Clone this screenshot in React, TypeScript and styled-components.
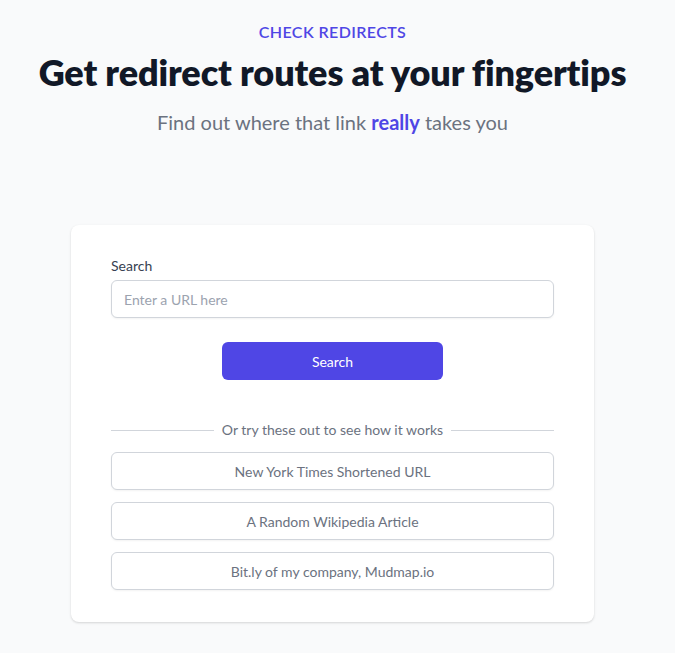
import React from "react";
import styled, { createGlobalStyle } from "styled-components";

const Global = createGlobalStyle`
  html, body { margin: 0; padding: 0; background: #f9fafb; }
  body { font-family: Lato, "Noto Sans", sans-serif; -webkit-font-smoothing: antialiased; }
  * { box-sizing: border-box; }
`;

const Page = styled.div`
  min-height: 653px;
  padding: 20px 10px 0 0;
  display: flex;
  flex-direction: column;
  align-items: center;
`;

const Eyebrow = styled.p`
  margin: 0;
  font-size: 16px;
  line-height: 24px;
  font-weight: 600;
  letter-spacing: 0.025em;
  text-transform: uppercase;
  color: #4f46e5;
`;

const Title = styled.h1`
  margin: 8px 0 0;
  font-size: 36px;
  line-height: 40px;
  font-weight: 800;
  letter-spacing: -0.1px;
  color: #111827;
`;

const Subtitle = styled.p`
  margin: 16px 0 0;
  font-size: 20px;
  line-height: 28px;
  color: #6b7280;
`;

const Accent = styled.span`
  color: #4f46e5;
  font-weight: 700;
`;

const Card = styled.div`
  margin-top: 89px;
  width: 523px;
  background: #fff;
  border-radius: 8px;
  box-shadow: 0 1px 3px rgba(0,0,0,0.1), 0 1px 2px rgba(0,0,0,0.06);
  padding: 31px 40px 32px;
  display: flex;
  flex-direction: column;
`;

const Label = styled.label`
  font-size: 14px;
  line-height: 20px;
  color: #374151;
`;

const Input = styled.input`
  margin-top: 4px;
  height: 38px;
  width: 100%;
  border: 1px solid #d1d5db;
  border-radius: 6px;
  padding: 0 12px;
  font-family: inherit;
  font-size: 14px;
  color: #111827;
  outline: none;
  box-shadow: 0 1px 2px rgba(0,0,0,0.05);
  &::placeholder { color: #9ca3af; }
`;

const PrimaryButton = styled.button`
  margin: 24px auto 0;
  width: 221px;
  height: 38px;
  border: none;
  border-radius: 6px;
  background: #4f46e5;
  color: #fff;
  font-family: inherit;
  font-size: 14px;
  cursor: pointer;
`;

const Divider = styled.div`
  margin-top: 40px;
  display: flex;
  align-items: center;
  gap: 8px;
  font-size: 14px;
  line-height: 20px;
  color: #6b7280;
  &::before, &::after {
    content: "";
    flex: 1;
    height: 1px;
    background: #d1d5db;
  }
`;

const Examples = styled.div`
  margin-top: 12px;
  display: flex;
  flex-direction: column;
  gap: 12px;
`;

const ExampleButton = styled.button`
  height: 38px;
  width: 100%;
  background: #fff;
  border: 1px solid #d1d5db;
  border-radius: 6px;
  box-shadow: 0 1px 2px rgba(0,0,0,0.05);
  font-family: inherit;
  font-size: 14px;
  color: #6b7280;
  cursor: pointer;
`;

const examples = [
  "New York Times Shortened URL",
  "A Random Wikipedia Article",
  "Bit.ly of my company, Mudmap.io",
];

export default function App() {
  return (
    <>
      <Global />
      <Page>
        <Eyebrow>Check Redirects</Eyebrow>
        <Title>Get redirect routes at your fingertips</Title>
        <Subtitle>
          Find out where that link <Accent>really</Accent> takes you
        </Subtitle>
        <Card>
          <Label htmlFor="url">Search</Label>
          <Input id="url" placeholder="Enter a URL here" />
          <PrimaryButton>Search</PrimaryButton>
          <Divider>Or try these out to see how it works</Divider>
          <Examples>
            {examples.map((e) => (
              <ExampleButton key={e}>{e}</ExampleButton>
            ))}
          </Examples>
        </Card>
      </Page>
    </>
  );
}
